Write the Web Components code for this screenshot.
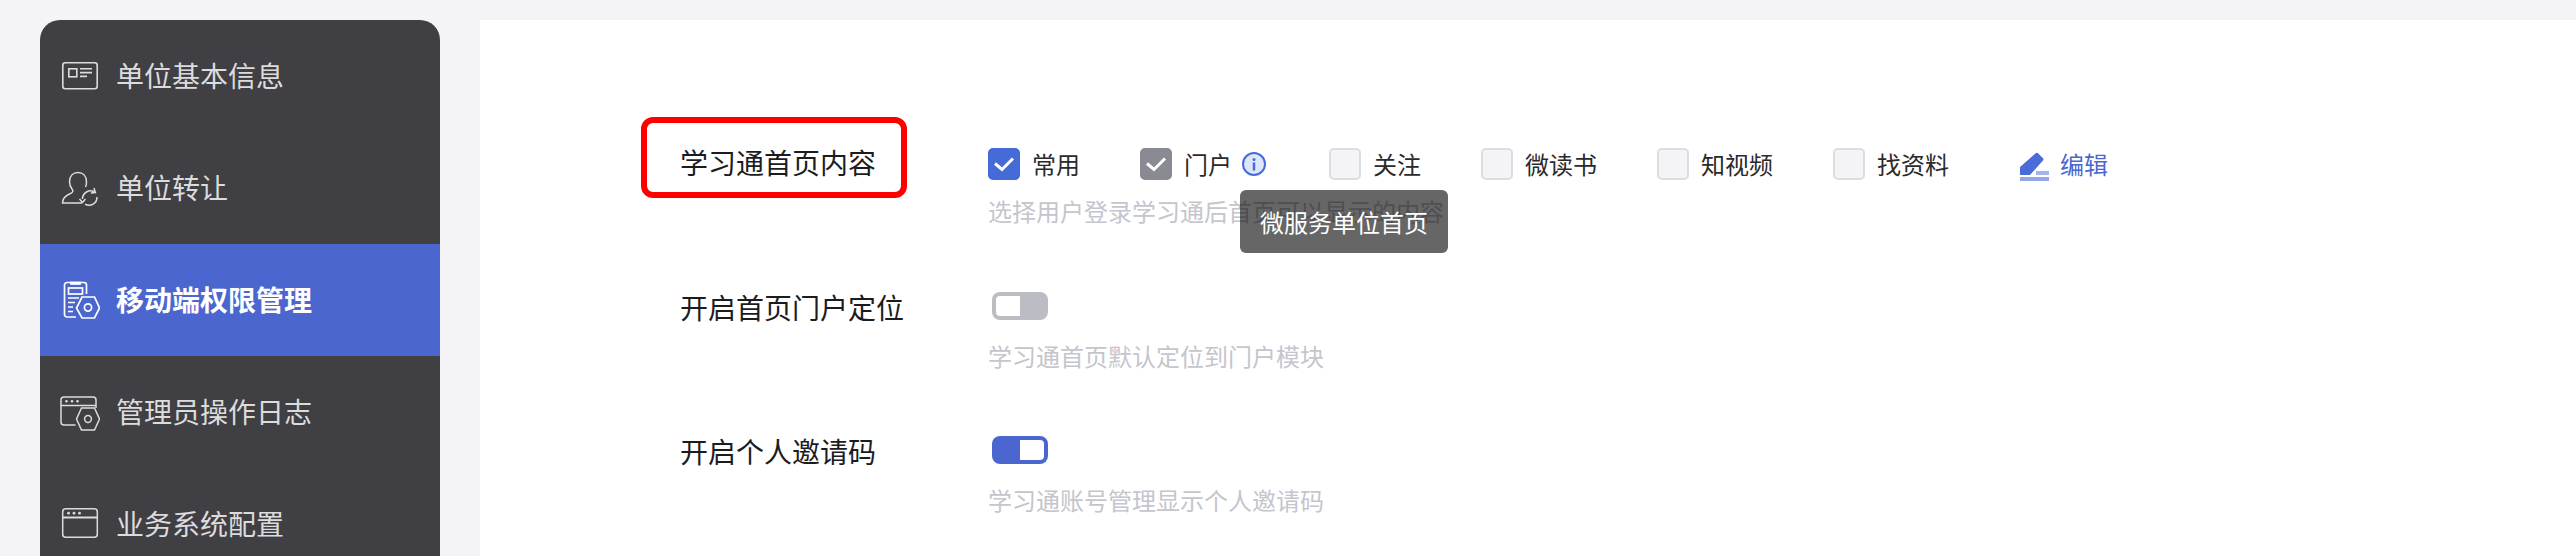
<!DOCTYPE html>
<html lang="zh">
<head>
<meta charset="utf-8">
<title>移动端权限管理</title>
<style>
html,body{margin:0;height:556px;overflow:hidden;background:#f4f4f6;}
body{font-family:"Noto Sans CJK SC","Noto Sans",sans-serif;}
</style>
</head>
<body>
<admin-page>
    <side-nav slot="nav">
        <nav-item>
            <svg slot="icon" width="40" height="40" viewBox="0 0 40 40" fill="none" stroke="currentColor" stroke-width="1.6">
                <rect x="2.800" y="6.800" width="34.400" height="26" rx="2.500"/>
                <rect x="8.800" y="12.800" width="8" height="8"/>
                <path d="M20 12.800h12M20 16.600h12M20 20.400h7"/>
            </svg>
            单位基本信息
        </nav-item>
        <nav-item>
            <svg slot="icon" width="40" height="40" viewBox="0 0 40 40" fill="none" stroke="currentColor" stroke-width="1.500">
                <path d="M22 35H2.500c0-5 3-7.500 8-9.500 2.500-1 3-2.500 1.500-4.500-1.500-2-2.500-4-2.500-7 0-6 3.500-9.500 8.500-9.500s8.500 3.500 8.500 9.500c0 2-.3 3.500-1 5"/>
                <path d="M22.500 31a8 8 0 0 1 12-7M37 29a8 8 0 0 1-12 7.200"/>
                <path d="M34 20l1.400 4.500-4.500.5M25.500 31l-3 3.400-3-3.400"/>
            </svg>
            单位转让
        </nav-item>
        <nav-item active>
            <svg slot="icon" width="40" height="40" viewBox="0 0 40 40" fill="none" stroke="currentColor" stroke-width="1.700">
                <path d="M16 37H7a2.500 2.500 0 0 1-2.500-2.500V5A2.500 2.500 0 0 1 7 2.500h17A2.500 2.500 0 0 1 26.500 5v9"/>
                <path d="M11 2.500h9v1.500h-9z"/>
                <rect x="8.500" y="8" width="14" height="6"/>
                <path d="M8 18h11M8 22.500h7M8 27h5M8 31.500h5"/>
                <path d="M22 17h12.500l5 11-5 10H22l-5.500-10z"/>
                <circle cx="28" cy="27.500" r="3.600"/>
            </svg>
            移动端权限管理
        </nav-item>
        <nav-item>
            <svg slot="icon" width="40" height="40" viewBox="0 0 40 40" fill="none" stroke="currentColor" stroke-width="1.500">
                <path d="M15.500 33H4a3 3 0 0 1-3-3V8a3 3 0 0 1 3-3h29a3 3 0 0 1 3 3v8"/>
                <path d="M1 13.500h35"/>
                <circle cx="6.500" cy="9.300" r="1.300" fill="currentColor" stroke="none"/>
                <circle cx="12" cy="9.300" r="1.300" fill="currentColor" stroke="none"/>
                <circle cx="17.500" cy="9.300" r="1.300" fill="currentColor" stroke="none"/>
                <path d="M21.500 16h13l5 11-5 11h-13l-5-11z" fill="#403f44"/>
                <circle cx="28" cy="27" r="3.400"/>
            </svg>
            管理员操作日志
        </nav-item>
        <nav-item>
            <svg slot="icon" width="40" height="40" viewBox="0 0 40 40" fill="none" stroke="currentColor" stroke-width="1.500">
                <rect x="2.700" y="4.800" width="34.600" height="28.400" rx="3"/>
                <path d="M2.700 13.500h34.600" stroke-width="2"/>
                <circle cx="8.500" cy="9.200" r="1.400" fill="currentColor" stroke="none"/>
                <circle cx="14" cy="9.200" r="1.400" fill="currentColor" stroke="none"/>
                <circle cx="19.500" cy="9.200" r="1.400" fill="currentColor" stroke="none"/>
            </svg>
            业务系统配置
        </nav-item>
    </side-nav>

    <setting-row marked>
        <span slot="label">学习通首页内容</span>
        <module-check checked>常用</module-check>
        <module-check locked>门户<info-tip tip="微服务单位首页"></info-tip></module-check>
        <module-check>关注</module-check>
        <module-check>微读书</module-check>
        <module-check>知视频</module-check>
        <module-check>找资料</module-check>
        <edit-link>编辑</edit-link>
        <span slot="hint">选择用户登录学习通后首页可以显示的内容</span>
    </setting-row>
    <setting-row>
        <span slot="label">开启首页门户定位</span>
        <switch-box></switch-box>
        <span slot="hint">学习通首页默认定位到门户模块</span>
    </setting-row>
    <setting-row>
        <span slot="label">开启个人邀请码</span>
        <switch-box on></switch-box>
        <span slot="hint">学习通账号管理显示个人邀请码</span>
    </setting-row>
</admin-page>

<script>
class AdminPage extends HTMLElement{
    constructor(){
        super();
        this.attachShadow({mode: 'open'});
        this.shadowRoot.innerHTML = `
        <style>
        :host{display:flex;gap:40px;padding:20px 0 0 40px;height:536px;overflow:hidden;}
        main{flex:1;background:#fff;padding:123px 0 0 200px;height:600px;}
        </style>
        <slot name="nav"></slot>
        <main><slot></slot></main>
        `
    }
}
customElements.define("admin-page", AdminPage)

class SideNav extends HTMLElement{
    constructor(){
        super();
        this.attachShadow({mode: 'open'});
        this.shadowRoot.innerHTML = `
        <style>
        :host{display:block;flex:none;width:400px;height:600px;background:#403f44;border-radius:20px 20px 0 0;overflow:hidden;}
        </style>
        <slot></slot>
        `
    }
}
customElements.define("side-nav", SideNav)

class NavItem extends HTMLElement{
    constructor(){
        super();
        this.attachShadow({mode: 'open'});
        this.shadowRoot.innerHTML = `
        <style>
        :host{display:flex;align-items:center;gap:16px;height:112px;padding-left:20px;font-size:28px;color:#dcdcdc;}
        :host([active]){background:#4b67cf;color:#fff;font-weight:700;}
        ::slotted(svg){flex:none;display:block;}
        span{margin-top:-2px;}
        </style>
        <slot name="icon"></slot>
        <span><slot></slot></span>
        `
    }
}
customElements.define("nav-item", NavItem)

class SettingRow extends HTMLElement{
    constructor(){
        super();
        this.attachShadow({mode: 'open'});
        this.shadowRoot.innerHTML = `
        <style>
        :host{display:grid;grid-template-columns:308px 1fr;height:144px;align-content:start;color:#1c1c1e;}
        :host([marked]){height:145px;}
        .label{position:relative;font-size:28px;line-height:38px;height:40px;}
        :host([marked]) .label::after{content:"";position:absolute;left:-39px;top:-26px;width:254px;height:69px;border:6px solid #f00;border-radius:12px;}
        .controls{display:flex;align-items:center;height:32px;margin-top:2px;}
        :host([marked]) .controls{margin-top:5px;}
        .hint{grid-column:2;font-size:24px;line-height:32px;margin-top:12px;color:#c4c5cd;}
        </style>
        <div class="label"><slot name="label"></slot></div>
        <div class="controls"><slot></slot></div>
        <div class="hint"><slot name="hint"></slot></div>
        `
    }
}
customElements.define("setting-row", SettingRow)

class ModuleCheck extends HTMLElement{
    constructor(){
        super();
        this.attachShadow({mode: 'open'});
        this.shadowRoot.innerHTML = `
        <style>
        :host{display:flex;align-items:center;gap:12px;width:152px;font-size:24px;line-height:32px;color:#2a2a2c;}
        :host([locked]){width:189px;}
        :host(:nth-of-type(n+4)){width:176px;}
        .box{box-sizing:border-box;width:32px;height:32px;border-radius:5px;border:2px solid #dcdde2;background:#f4f4f6;display:flex;align-items:center;justify-content:center;flex:none;}
        svg{display:none;}
        :host([checked]) .box{background:#456bd9;border-color:#456bd9;}
        :host([locked]) .box{background:#8a8a93;border-color:#8a8a93;}
        :host([checked]) svg,:host([locked]) svg{display:block;}
        .text{display:flex;align-items:center;}
        </style>
        <span class="box">
            <svg width="22" height="22" viewBox="0 0 22 22" fill="none" stroke="#fff" stroke-width="3"><path d="M2 10.500l7 6 11-11"/></svg>
        </span>
        <span class="text"><slot></slot></span>
        `
    }
}
customElements.define("module-check", ModuleCheck)

class InfoTip extends HTMLElement{
    constructor(){
        super();
        this.attachShadow({mode: 'open'});
        this.shadowRoot.innerHTML = `
        <style>
        :host{display:block;position:relative;width:24px;height:24px;margin-left:10px;}
        svg{display:block;}
        .tip{position:absolute;left:-2px;top:38px;width:208px;height:63px;box-sizing:border-box;background:rgba(0,0,0,.6);color:#fff;font-size:24px;line-height:63px;text-align:center;border-radius:6px;white-space:nowrap;}
        </style>
        <svg width="24" height="24" viewBox="0 0 24 24">
            <circle cx="12" cy="12" r="11" fill="#dfe6fa" stroke="#456bd9" stroke-width="2"/>
            <circle cx="12" cy="7.500" r="1.500" fill="#456bd9"/>
            <path d="M12 10.500v8" stroke="#456bd9" stroke-width="2.500"/>
        </svg>
        <div class="tip"></div>
        `
    }
    connectedCallback(){
        this.shadowRoot.querySelector(".tip").textContent = this.getAttribute("tip");
    }
}
customElements.define("info-tip", InfoTip)

class EditLink extends HTMLElement{
    constructor(){
        super();
        this.attachShadow({mode: 'open'});
        this.shadowRoot.innerHTML = `
        <style>
        :host{display:flex;align-items:center;gap:11px;font-size:24px;line-height:32px;color:#4b67cf;margin-left:10px;}
        svg{display:block;flex:none;margin-top:6px;}
        </style>
        <svg width="30" height="30" viewBox="0 0 30 30">
            <path d="M17 1q1.200-.8 2 .2l5 5q1 1.200 0 2.300L11 23H1v-8z" fill="#4a6bd8"/>
            <rect x="17" y="19" width="13" height="4" fill="#a5b5ec"/>
            <rect x="1" y="25" width="29" height="4" fill="#93a6e8"/>
        </svg>
        <slot></slot>
        `
    }
}
customElements.define("edit-link", EditLink)

class SwitchBox extends HTMLElement{
    constructor(){
        super();
        this.attachShadow({mode: 'open'});
        this.shadowRoot.innerHTML = `
        <style>
        :host{display:flex;box-sizing:border-box;width:56px;height:28px;margin-left:4px;padding:4px;border-radius:8px;background:#bbbcc4;}
        :host([on]){background:#4b67cf;justify-content:flex-end;}
        .knob{width:24px;height:20px;border-radius:4px 0 0 4px;background:#fff;}
        :host([on]) .knob{border-radius:0 4px 4px 0;}
        </style>
        <span class="knob"></span>
        `
    }
}
customElements.define("switch-box", SwitchBox)
</script>
</body>
</html>
